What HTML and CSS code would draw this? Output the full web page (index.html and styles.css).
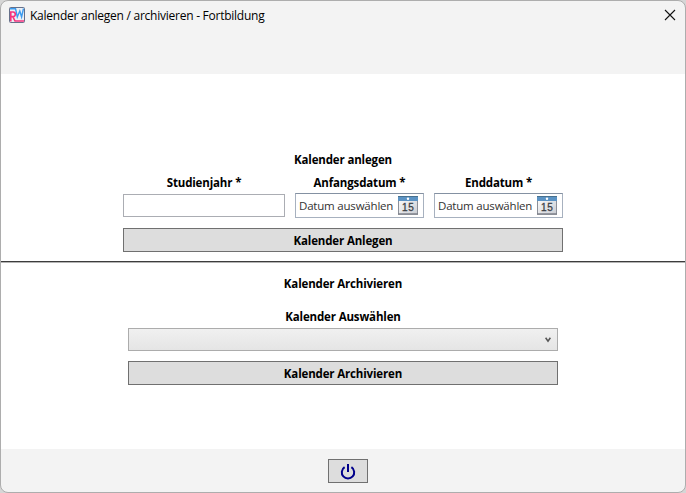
FILE: index.html
```html
<!DOCTYPE html>
<html lang="de">
<head>
    <meta charset="UTF-8">
    <meta name="viewport" content="width=device-width, initial-scale=1.0">
    <title>Kalender anlegen / archivieren - Fortbildung</title>
    <link rel="stylesheet" href="styles.css">
</head>
<body>
    <div class="window">
        <header class="titlebar">
            <svg class="logo" width="16" height="16" viewBox="0 0 16 16">
                <rect x="0.5" y="0.5" width="15" height="15" rx="1" fill="#edf0f5" stroke="#66708a"/>
                <path d="M1 1.8h6" stroke="#3c9cf0" stroke-width="1.4"/>
                <path d="M6.5 1.5l1.8 8.5L10.8 4l1.8 6L14.5 1.5" fill="none" stroke="#3c9cf0" stroke-width="1.4"/>
                <path d="M1.8 14.5V5H4a2.2 2.2 0 0 1 0 4.6H2M3.8 9.6L6 14H15" fill="none" stroke="#f5327d" stroke-width="1.6"/>
            </svg>
            <h1>Kalender anlegen / archivieren - Fortbildung</h1>
            <svg class="close" width="12" height="12" viewBox="0 0 12 12">
                <path d="M1 1l10 10M11 1L1 11" stroke="#111" stroke-width="1.1"/>
            </svg>
        </header>
        <main>
            <section class="create">
                <h2>Kalender anlegen</h2>
                <div class="fields">
                    <div class="form-group year">
                        <label for="studienjahr">Studienjahr *</label>
                        <input type="text" id="studienjahr">
                    </div>
                    <div class="form-group">
                        <label>Anfangsdatum *</label>
                        <div class="datepicker">
                            <span>Datum auswählen</span>
                            <svg width="20" height="19" viewBox="0 0 20 19">
                                <defs>
                                    <linearGradient id="sheet" x1="0" y1="0" x2="1" y2="1">
                                        <stop offset="0" stop-color="#fff"/>
                                        <stop offset="1" stop-color="#c9ccd2"/>
                                    </linearGradient>
                                </defs>
                                <rect x="0.5" y="0.5" width="19" height="17.5" fill="url(#sheet)" stroke="#8c9099"/>
                                <path d="M0 18.2h20" stroke="#777b84" stroke-width="1.2"/>
                                <rect x="0" y="0" width="20" height="5" fill="#5b93c4"/>
                                <path d="M0 .5h20" stroke="#47718f"/>
                                <circle cx="10" cy="2.7" r="1.2" fill="#fff"/>
                                <text x="10.2" y="15.4" class="day">15</text>
                            </svg>
                        </div>
                    </div>
                    <div class="form-group">
                        <label>Enddatum *</label>
                        <div class="datepicker">
                            <span>Datum auswählen</span>
                            <svg width="20" height="19" viewBox="0 0 20 19">
                                <rect x="0.5" y="0.5" width="19" height="17.5" fill="url(#sheet)" stroke="#8c9099"/>
                                <path d="M0 18.2h20" stroke="#777b84" stroke-width="1.2"/>
                                <rect x="0" y="0" width="20" height="5" fill="#5b93c4"/>
                                <path d="M0 .5h20" stroke="#47718f"/>
                                <circle cx="10" cy="2.7" r="1.2" fill="#fff"/>
                                <text x="10.2" y="15.4" class="day">15</text>
                            </svg>
                        </div>
                    </div>
                </div>
                <button>Kalender Anlegen</button>
            </section>
            <hr>
            <section class="archive">
                <h2>Kalender Archivieren</h2>
                <label>Kalender Auswählen</label>
                <div class="combobox">
                    <svg width="6" height="6" viewBox="0 0 6 6">
                        <path d="M.6 .8L3 4.2L5.4 .8" fill="none" stroke="#555" stroke-width="1.6"/>
                    </svg>
                </div>
                <button>Kalender Archivieren</button>
            </section>
        </main>
        <footer>
            <button class="power" aria-label="Beenden">
                <svg width="16" height="18" viewBox="0 0 16 18">
                    <path d="M4.6 4.2a6.2 6.2 0 1 0 6.8 0" fill="none" stroke="#00008b" stroke-width="2"/>
                    <path d="M8 1v8" stroke="#00008b" stroke-width="2"/>
                </svg>
            </button>
        </footer>
    </div>
</body>
</html>
```
FILE: styles.css
```css
* {
    box-sizing: border-box;
}
body {
    margin: 0;
    height: 493px;
    background-color: #d6d6d6;
    font-family: "Open Sans", "Noto Sans", sans-serif;
    font-size: 12px;
    line-height: 16px;
    color: #000;
    overflow: hidden;
}
.window {
    display: flex;
    flex-direction: column;
    height: 493px;
    border: 1px solid #adadad;
    border-radius: 8px;
    background-color: #f3f3f3;
    overflow: hidden;
}
.titlebar {
    display: flex;
    align-items: flex-start;
    height: 73px;
    padding: 6px 9px 0 8px;
}
.titlebar h1 {
    margin: 1px 0 0 5px;
    font-size: 12px;
    font-weight: 400;
    letter-spacing: -0.25px;
    white-space: nowrap;
}
.close {
    margin: 2px 0 0 auto;
}
main {
    height: 375px;
    background-color: #fff;
}
section {
    display: flex;
    flex-direction: column;
}
h2, label {
    margin: 0;
    font-size: 11.5px;
    font-weight: 700;
    letter-spacing: -0.15px;
    text-align: center;
}
.create {
    height: 187px;
    padding: 78px 122px 0;
}
hr {
    height: 2px;
    margin: 0;
    border: 0;
    border-top: 1px solid #3c3c3c;
    background-color: #b4b4b4;
}
.fields {
    display: flex;
    gap: 10px;
    margin-top: 7px;
}
.form-group {
    display: flex;
    flex-direction: column;
    width: 129px;
    gap: 2px;
}
.year {
    width: 162px;
}
.form-group input {
    width: 100%;
    height: 23px;
    margin-top: 1px;
    padding: 2px;
    border: 1px solid #abadb3;
    background-color: #fff;
}
.datepicker {
    display: flex;
    align-items: center;
    justify-content: space-between;
    height: 25px;
    padding: 0 5px 0 3px;
    border: 1px solid #a7b1bf;
    border-top-color: #8491a2;
    color: #333;
    font-size: 11.5px;
    letter-spacing: -0.2px;
    white-space: nowrap;
}
.datepicker span {
    padding-top: 1px;
}
.datepicker svg {
    margin-bottom: 1px;
}
.day {
    font-family: "Liberation Sans", Arial, sans-serif;
    font-size: 10px;
    letter-spacing: 0.7px;
    text-anchor: middle;
    fill: #3a3d44;
    stroke: #3a3d44;
    stroke-width: 0.3px;
}
button {
    height: 24px;
    padding: 1px 0 0;
    border: 1px solid #707070;
    background-color: #ddd;
    color: #000;
    font-family: inherit;
    font-size: 11.5px;
    font-weight: 700;
    line-height: 16px;
    letter-spacing: -0.15px;
}
.create button {
    margin-top: 10px;
}
.archive {
    padding: 13px 127px 0;
}
.archive label {
    margin-top: 17px;
}
.combobox {
    display: flex;
    align-items: center;
    justify-content: flex-end;
    height: 23px;
    margin: 3px 0 10px;
    padding-right: 6px;
    border: 1px solid #acacac;
    background: linear-gradient(#f0f0f0, #e5e5e5);
}
footer {
    display: flex;
    justify-content: center;
    padding: 10px 0 0 10px;
}
.power {
    display: flex;
    align-items: center;
    justify-content: center;
    width: 40px;
}
```
